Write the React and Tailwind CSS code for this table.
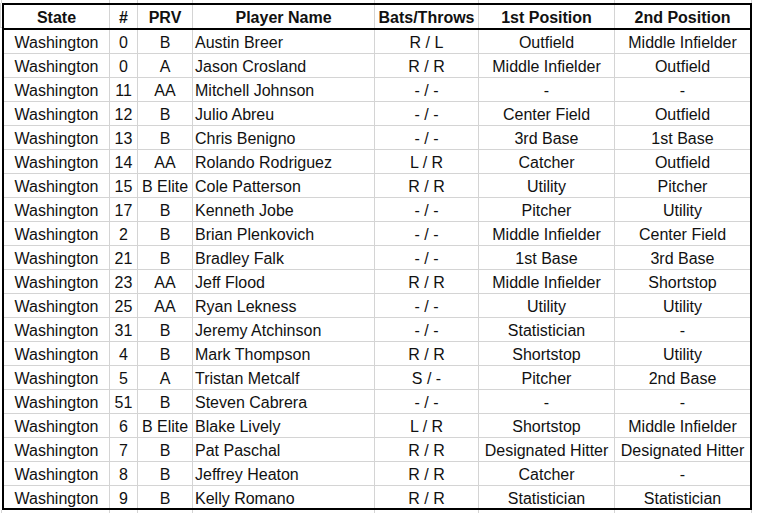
import React from "react";

const rows = [
  ["Washington", "0", "B", "Austin Breer", "R / L", "Outfield", "Middle Infielder"],
  ["Washington", "0", "A", "Jason Crosland", "R / R", "Middle Infielder", "Outfield"],
  ["Washington", "11", "AA", "Mitchell Johnson", "- / -", "-", "-"],
  ["Washington", "12", "B", "Julio Abreu", "- / -", "Center Field", "Outfield"],
  ["Washington", "13", "B", "Chris Benigno", "- / -", "3rd Base", "1st Base"],
  ["Washington", "14", "AA", "Rolando Rodriguez", "L / R", "Catcher", "Outfield"],
  ["Washington", "15", "B Elite", "Cole Patterson", "R / R", "Utility", "Pitcher"],
  ["Washington", "17", "B", "Kenneth Jobe", "- / -", "Pitcher", "Utility"],
  ["Washington", "2", "B", "Brian Plenkovich", "- / -", "Middle Infielder", "Center Field"],
  ["Washington", "21", "B", "Bradley Falk", "- / -", "1st Base", "3rd Base"],
  ["Washington", "23", "AA", "Jeff Flood", "R / R", "Middle Infielder", "Shortstop"],
  ["Washington", "25", "AA", "Ryan Lekness", "- / -", "Utility", "Utility"],
  ["Washington", "31", "B", "Jeremy Atchinson", "- / -", "Statistician", "-"],
  ["Washington", "4", "B", "Mark Thompson", "R / R", "Shortstop", "Utility"],
  ["Washington", "5", "A", "Tristan Metcalf", "S / -", "Pitcher", "2nd Base"],
  ["Washington", "51", "B", "Steven Cabrera", "- / -", "-", "-"],
  ["Washington", "6", "B Elite", "Blake Lively", "L / R", "Shortstop", "Middle Infielder"],
  ["Washington", "7", "B", "Pat Paschal", "R / R", "Designated Hitter", "Designated Hitter"],
  ["Washington", "8", "B", "Jeffrey Heaton", "R / R", "Catcher", "-"],
  ["Washington", "9", "B", "Kelly Romano", "R / R", "Statistician", "Statistician"],
];

const headers = ["State", "#", "PRV", "Player Name", "Bats/Throws", "1st Position", "2nd Position"];

export default function App() {
  return (
    <div
      className="w-[757px] h-[513px] bg-white overflow-hidden text-[16px] text-[#111]"
      style={{ fontFamily: '"Liberation Sans", Arial, sans-serif' }}
    >
      {/* gridline stubs above */}
      <div className="flex h-[3px] pl-[1px]">
        <div className="w-[1px] bg-[#d4d4d4]" />
        <div className="grid grid-cols-[108px_28px_55px_182px_104px_136px_137px] h-full">
          {headers.map((h, i) => (
            <div key={i} className="border-r border-[#d4d4d4]" />
          ))}
        </div>
      </div>
      <div className="flex">
        <div className="w-[2px] flex flex-col">
          <div className="h-[25px] border-b border-[#d4d4d4] border-l" />
        </div>
        <div className="w-[750px] border-2 border-black">
          <div className="grid grid-cols-[106px_28px_55px_182px_104px_136px_135px] border-b-2 border-black">
            {headers.map((h, i) => (
              <div
                key={i}
                className={`h-[23px] leading-[23px] pt-[1px] font-bold text-center ${i < 6 ? "border-r border-[#d4d4d4]" : ""}`}
              >
                {h}
              </div>
            ))}
          </div>
          {rows.map((r, ri) => (
            <div
              key={ri}
              className={`grid grid-cols-[106px_28px_55px_182px_104px_136px_135px] ${ri < rows.length - 1 ? "h-[24px] border-b border-[#d4d4d4]" : "h-[22px]"}`}
            >
              {r.map((c, ci) => (
                <div
                  key={ci}
                  className={`leading-[21px] pt-[2px] whitespace-nowrap overflow-hidden ${ci === 3 ? "text-left pl-[2px]" : "text-center"} ${ci < 6 ? "border-r border-[#d4d4d4]" : ""}`}
                >
                  {c}
                </div>
              ))}
            </div>
          ))}
        </div>
      </div>
      {/* gridline stubs below */}
      <div className="flex h-[3px] pl-[1px]">
        <div className="w-[1px] bg-[#d4d4d4]" />
        <div className="grid grid-cols-[108px_28px_55px_182px_104px_136px_137px] h-full">
          {headers.map((h, i) => (
            <div key={i} className="border-r border-[#d4d4d4]" />
          ))}
        </div>
      </div>
    </div>
  );
}
